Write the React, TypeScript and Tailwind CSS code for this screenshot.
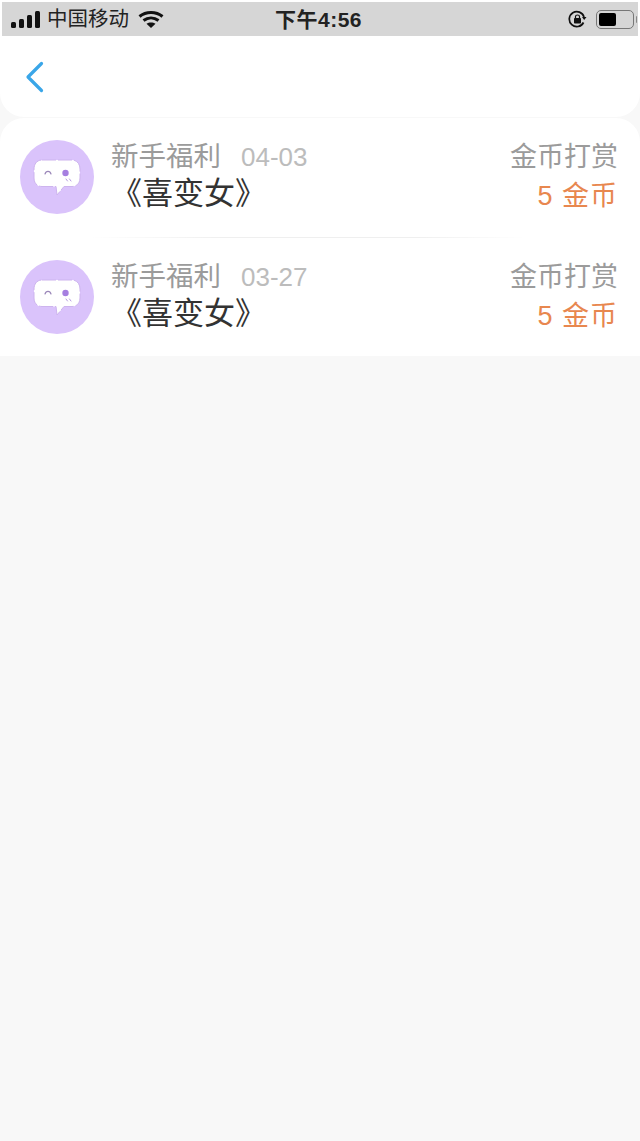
const cjk = "font-['Liberation_Sans','Noto_Sans_CJK_SC',sans-serif]";

function BubbleAvatar() {
  return (
    <div className="flex h-[74px] w-[74px] shrink-0 items-center justify-center rounded-full bg-[#dac3fb]">
      <svg width="74" height="74" viewBox="0 0 74 74" fill="none">
        <path
          d="M22 20H52C57 20 60 24 60 29V38C60 43 57 46.500 52 46.500H44L37 55L36 46.500H22C17 46.500 14 43 14 38V29C14 24 17 20 22 20Z"
          fill="#ffffff"
          stroke="#cdb4ee"
          strokeWidth="1"
          strokeDasharray="14 2"
        />
        <path d="M25 34C26 30.500 30 30.500 31 34" stroke="#9a86b8" strokeWidth="1.200" strokeLinecap="round" />
        <circle cx="45.500" cy="33" r="3.200" fill="#a67fe0" />
        <path d="M46 39L47.500 41M49.500 39L51 41" stroke="#b79ce0" strokeWidth="1" strokeLinecap="round" />
      </svg>
    </div>
  );
}

function RewardRow({ date }: { date: string }) {
  return (
    <div className="flex h-[119px] items-start pl-[20px] pr-[22px] pt-[22px]">
      <BubbleAvatar />
      <div className="ml-[17px] flex-1">
        <div className="flex h-[34px] items-center">
          <span className="text-[27.500px] leading-[34px] text-[#9b9b9b]">新手福利</span>
          <span className="ml-[20px] text-[26px] leading-[34px] text-[#bcbcbc]">{date}</span>
        </div>
        <div className="mt-[1px] text-[31px] leading-[38px] text-[#333333]">《喜变女》</div>
      </div>
      <div className="flex flex-col items-end">
        <div className="text-[27px] leading-[34px] text-[#9b9b9b]">金币打赏</div>
        <div className="mt-[3px] text-[27px] leading-[38px] tracking-[1px] text-[#e8874f]">5 金币</div>
      </div>
    </div>
  );
}

export default function App() {
  return (
    <div className={`h-[1141px] w-[640px] overflow-hidden bg-[#f8f8f8] ${cjk}`}>
      <div className="bg-white p-[2px] pb-0">
        <div className="flex h-[34px] items-center justify-between bg-[#d6d6d6] text-black">
          <div className="flex w-[200px] items-center">
            <svg className="ml-[9px]" width="30" height="19" viewBox="0 0 30 19" fill="#111111">
              <rect x="0" y="12" width="5" height="6" rx="1.500" />
              <rect x="8" y="9" width="5" height="9" rx="1.500" />
              <rect x="16" y="5" width="5" height="13" rx="1.500" />
              <rect x="24" y="1" width="5" height="17" rx="1.500" />
            </svg>
            <span className="ml-[6px] text-[20.500px] leading-none text-[#222222]">中国移动</span>
            <svg className="ml-[9px]" width="26" height="19" viewBox="0 0 26 19" fill="none" stroke="#111111" strokeWidth="3">
              <path d="M1.500 6.500C8 1 18 1 24.500 6.500" />
              <path d="M5.500 10.500C10 7 16 7 20.500 10.500" />
              <path d="M13 18L8.500 13.800C11 12 15 12 17.500 13.800Z" fill="#111111" stroke="none" />
            </svg>
          </div>
          <span className="ml-[73px] text-[21px] font-semibold leading-none tracking-[0.5px] text-[#222222]">下午4:56</span>
          <div className="flex flex-1 items-center justify-end pr-[1px]">
            <svg width="19" height="19" viewBox="0 0 19 19" fill="none">
              <path d="M15.500 12.500A7.500 7.500 0 1 1 16 7" stroke="#111111" strokeWidth="1.700" />
              <path d="M14 7H18.500L16.200 10Z" fill="#111111" />
              <rect x="6" y="8" width="7" height="5.500" rx="0.800" fill="#111111" />
              <path d="M7.500 8V6.500C7.500 4.500 11.500 4.500 11.500 6.500V8" stroke="#111111" strokeWidth="1.200" />
            </svg>
            <div className="ml-[9px] flex h-[19px] w-[38px] items-center rounded-[5px] border-[1.500px] border-[#777777] p-[2px]">
              <div className="h-full w-[17px] rounded-[2px] bg-black" />
            </div>
            <div className="ml-[2px] h-[7px] w-[1.500px] rounded-r bg-[#888888]" />
          </div>
        </div>
      </div>

      <div className="flex h-[81px] items-center rounded-b-[24px] bg-white pl-[25px]">
        <svg width="20" height="32" viewBox="0 0 20 32" fill="none">
          <path d="M16.500 2.500L3 16L16.500 29.500" stroke="#3aa6e8" strokeWidth="3.200" strokeLinecap="round" strokeLinejoin="round" />
        </svg>
      </div>

      <div className="mt-[1px] h-[238px] rounded-t-[24px] bg-white">
        <RewardRow date="04-03" />
        <div className="h-[1px] bg-[linear-gradient(90deg,#ffffff_14%,#efefef_35%,#efefef_65%,#ffffff_82%)]" />
        <RewardRow date="03-27" />
      </div>
    </div>
  );
}
